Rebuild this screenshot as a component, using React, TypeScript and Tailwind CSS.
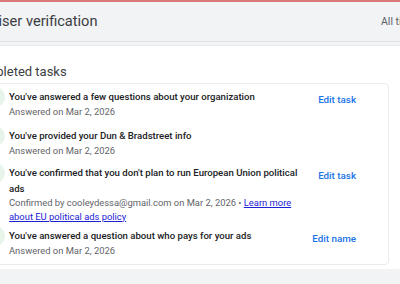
import React from "react";

function CheckIcon() {
  return (
    <div className="w-[20px] h-[20px] shrink-0 rounded-full bg-[#e6f4ea] flex items-center justify-center mt-[-2px]">
      <svg width="12" height="12" viewBox="0 0 24 24" fill="none" stroke="#1e8e3e" strokeWidth="3" strokeLinecap="round" strokeLinejoin="round">
        <path d="M5 12.5l4.5 4.5L19 7.5" />
      </svg>
    </div>
  );
}

type RowProps = {
  title: React.ReactNode;
  sub: React.ReactNode;
  action?: string;
  className?: string;
};

function Row({ title, sub, action, className }: RowProps) {
  return (
    <div className={"flex items-start gap-[4px] py-[4px] " + (className ?? "")}>
      <CheckIcon />
      <div className="w-[298px] shrink-0">
        <div className="text-[9.6px] leading-[15.5px] font-medium text-[#202124]">{title}</div>
        <div className="text-[9.4px] leading-[13.5px] text-[#5f6368]">{sub}</div>
      </div>
      <div className="flex-1 flex justify-end mt-[3px]">
        {action ? (
          <span className="text-[9.8px] leading-[15px] font-medium text-[#1a73e8] whitespace-nowrap">{action}</span>
        ) : null}
      </div>
    </div>
  );
}

export default function App() {
  return (
    <div
      className="w-[400px] h-[284px] overflow-hidden bg-[#f1f3f4] relative"
      style={{ fontFamily: "Roboto, 'Noto Sans', Arial, sans-serif" }}
    >
      <div className="h-[2px] bg-[#d9797b]" />
      <div className="h-[40px] flex items-center border-b border-[#dfe1e5] relative">
        <span className="ml-[-44px] text-[14.6px] text-[#3c4043] whitespace-nowrap">Advertiser verification</span>
        <span className="absolute left-[381px] top-[12px] text-[10.5px] text-[#5f6368] whitespace-nowrap">All time</span>
      </div>
      <div className="h-[4px] bg-[#f1f3f4] border-b border-[#e8eaed]" />
      <div className="bg-white h-[223px] pt-[18px]">
        <div className="ml-[-31px] text-[13px] leading-[16px] text-[#3c4043] whitespace-nowrap">Completed tasks</div>
        <div className="mt-[3px] ml-[-40px] mr-[11px] border border-[#ececec] rounded-[4px] pl-[24px] pr-[32px] pt-[1px] pb-[3px]">
          <Row
            title="You've answered a few questions about your organization"
            sub="Answered on Mar 2, 2026"
            action="Edit task"
          />
          <div className="h-[2px]" />
          <Row title="You've provided your Dun & Bradstreet info" sub="Answered on Mar 2, 2026" />
          <Row
            title="You've confirmed that you don't plan to run European Union political ads"
            sub={
              <>
                Confirmed by cooleydessa@gmail.com on Mar 2, 2026 •{" "}
                <span className="text-[#1a22d4] underline">Learn more about EU political ads policy</span>
              </>
            }
            action="Edit task"
          />
          <Row
            className="mt-[-3px]"
            title="You've answered a question about who pays for your ads"
            sub="Answered on Mar 2, 2026"
            action="Edit name"
          />
        </div>
      </div>
    </div>
  );
}
